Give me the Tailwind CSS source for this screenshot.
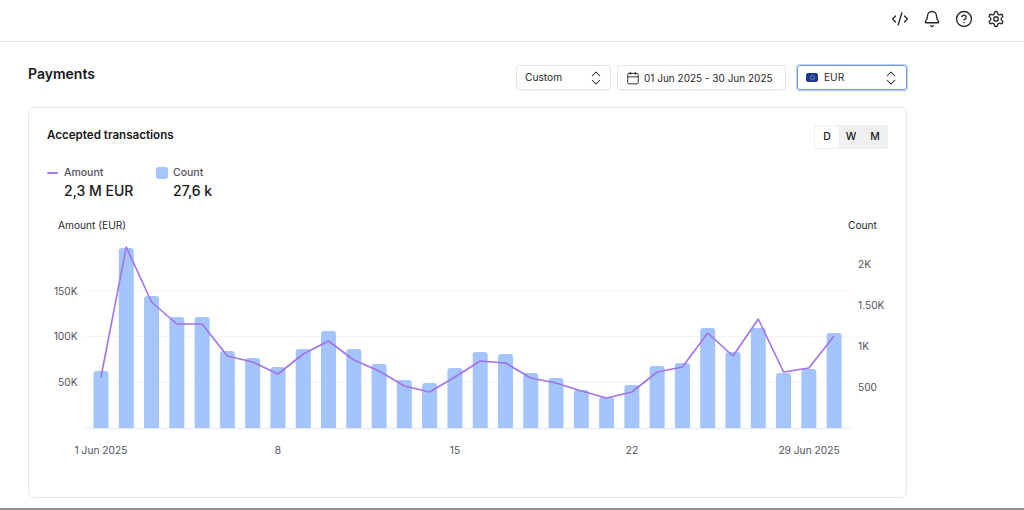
<!DOCTYPE html>
<html lang="en">
<head>
  <meta charset="UTF-8">
  <meta name="viewport" content="width=device-width, initial-scale=1.0">
  <title>Payments</title>
  <script src="https://cdn.jsdelivr.net/npm/@tailwindcss/browser@4"></script>
</head>
<body class="h-[510px] overflow-hidden bg-white font-['Inter',sans-serif] text-[#18181b]">

  <!-- Top bar -->
  <header class="h-[42px] border-b border-[#e8e8ea] flex items-center justify-end gap-[14px] pr-[19px] pb-[4px] text-[#27272a]">
    <svg class="w-[18px] h-[18px]" viewBox="0 0 24 24" fill="none" stroke="currentColor" stroke-width="1.8" stroke-linecap="round" stroke-linejoin="round"><path d="m18 16 4-4-4-4"/><path d="m6 8-4 4 4 4"/><path d="m14.5 4-5 16"/></svg>
    <svg class="w-[18px] h-[18px]" viewBox="0 0 24 24" fill="none" stroke="currentColor" stroke-width="1.8" stroke-linecap="round" stroke-linejoin="round"><path d="M10.3 21a1.94 1.94 0 0 0 3.4 0"/><path d="M3.26 15.33A1 1 0 0 0 4 17h16a1 1 0 0 0 .74-1.67C19.41 13.96 18 12.5 18 8A6 6 0 0 0 6 8c0 4.5-1.41 5.96-2.74 7.33"/></svg>
    <svg class="w-[18px] h-[18px]" viewBox="0 0 24 24" fill="none" stroke="currentColor" stroke-width="1.8" stroke-linecap="round" stroke-linejoin="round"><circle cx="12" cy="12" r="10"/><path d="M9.09 9a3 3 0 0 1 5.83 1c0 2-3 3-3 3"/><path d="M12 17h.01"/></svg>
    <svg class="w-[18px] h-[18px]" viewBox="0 0 24 24" fill="none" stroke="currentColor" stroke-width="1.8" stroke-linecap="round" stroke-linejoin="round"><path d="M12.22 2h-.44a2 2 0 0 0-2 2v.18a2 2 0 0 1-1 1.73l-.43.25a2 2 0 0 1-2 0l-.15-.08a2 2 0 0 0-2.73.73l-.22.38a2 2 0 0 0 .73 2.73l.15.1a2 2 0 0 1 1 1.72v.51a2 2 0 0 1-1 1.74l-.15.09a2 2 0 0 0-.73 2.73l.22.38a2 2 0 0 0 2.73.73l.15-.08a2 2 0 0 1 2 0l.43.25a2 2 0 0 1 1 1.73V20a2 2 0 0 0 2 2h.44a2 2 0 0 0 2-2v-.18a2 2 0 0 1 1-1.73l.43-.25a2 2 0 0 1 2 0l.15.08a2 2 0 0 0 2.73-.73l.22-.39a2 2 0 0 0-.73-2.73l-.15-.08a2 2 0 0 1-1-1.74v-.5a2 2 0 0 1 1-1.74l.15-.09a2 2 0 0 0 .73-2.73l-.22-.38a2 2 0 0 0-2.73-.73l-.15.08a2 2 0 0 1-2 0l-.43-.25a2 2 0 0 1-1-1.73V4a2 2 0 0 0-2-2z"/><circle cx="12" cy="12" r="3"/></svg>
  </header>

  <main class="w-[879px] ml-[28px] relative">
    <!-- Title and filters -->
    <div class="h-[65px] flex items-start justify-between pt-[23px]">
      <h1 class="text-[14px] leading-[20px] font-semibold mt-[-1px]">Payments</h1>
      <div class="flex items-center text-[10.2px] leading-none text-[#27272a]">
        <div class="w-[95px] h-[25px] mr-[6px] pl-[8px] pr-[5px] flex items-center justify-between border border-[#e4e4e7] rounded-[3px] shadow-[0_1px_1px_rgba(0,0,0,0.03)]">
          <span>Custom</span>
          <svg class="w-[18px] h-[18px]" viewBox="0 0 24 24" fill="none" stroke="currentColor" stroke-width="1.4" stroke-linecap="round" stroke-linejoin="round"><path d="m7 15 5 5 5-5"/><path d="m7 9 5-5 5 5"/></svg>
        </div>
        <div class="w-[169px] h-[25px] mr-[11px] pl-[8px] flex items-center gap-[4px] border border-[#e4e4e7] rounded-[3px] shadow-[0_1px_1px_rgba(0,0,0,0.03)]">
          <svg class="w-[14px] h-[14px]" viewBox="0 0 24 24" fill="none" stroke="currentColor" stroke-width="1.6" stroke-linecap="round" stroke-linejoin="round"><rect x="3" y="4" width="18" height="18" rx="2"/><path d="M16 2v4"/><path d="M8 2v4"/><path d="M3 10h18"/></svg>
          <span class="whitespace-nowrap text-[10px]">01 Jun 2025 - 30 Jun 2025</span>
        </div>
        <div class="w-[110px] h-[25px] pl-[8px] pr-[6px] flex items-center justify-between border border-[#6f9cf0] rounded-[3px] shadow-[0_0_0_1px_rgba(111,156,240,0.45)]">
          <span class="flex items-center gap-[6px]">
            <span class="w-[12px] h-[9px] rounded-[2px] bg-[#1e3a8a] flex items-center justify-center">
              <span class="w-[5px] h-[5px] rounded-full border border-[#6d87c9]"></span>
            </span>
            EUR
          </span>
          <svg class="w-[18px] h-[18px]" viewBox="0 0 24 24" fill="none" stroke="currentColor" stroke-width="1.4" stroke-linecap="round" stroke-linejoin="round"><path d="m7 15 5 5 5-5"/><path d="m7 9 5-5 5 5"/></svg>
        </div>
      </div>
    </div>

    <!-- Chart card -->
    <section class="relative h-[391px] border border-[#e8e8ea] rounded-[6px]">
      <div class="flex items-start justify-between pl-[18px] pr-[18px] pt-[19px]">
        <h2 class="text-[11.6px] leading-[16px] font-semibold">Accepted transactions</h2>
        <div class="flex h-[24px] p-[1px] mt-[-2px] rounded-[3px] bg-[#f0f0f1] text-[10.5px] font-medium">
          <span class="w-[24px] flex items-center justify-center rounded-[3px] bg-white">D</span>
          <span class="w-[24px] flex items-center justify-center">W</span>
          <span class="w-[24px] flex items-center justify-center">M</span>
        </div>
      </div>

      <div class="flex pl-[18px] mt-[17px]">
        <div class="w-[109px]">
          <div class="flex items-center h-[14px] text-[10.5px] font-medium text-[#52525b]">
            <span class="w-[11px] h-[2px] mr-[6px] rounded-full bg-[#a678e8]"></span>Amount
          </div>
          <div class="pl-[17px] mt-[1px] text-[14px] leading-[20px] font-medium">2,3 M EUR</div>
        </div>
        <div>
          <div class="flex items-center h-[14px] text-[10.5px] font-medium text-[#52525b]">
            <span class="w-[12px] h-[12px] mr-[5px] rounded-[3px] bg-[#a3c5fb]"></span>Count
          </div>
          <div class="pl-[17px] mt-[1px] text-[14px] leading-[20px] font-medium">27,6 k</div>
        </div>
      </div>

      <svg id="chart" class="absolute left-0 top-0 pointer-events-none" width="877" height="389" viewBox="29 108 877 389" font-size="10.2" fill="#52525b"></svg>
    </section>
  </main>

  <div class="absolute left-0 top-[508px] w-full h-[2px] bg-[#8f8f92]"></div>

  <script>
    const barTops = [371,248,296,317,317,351,358,367,349,331,349,364,380,383,368,352,354,373,378,390,397,385,366,363,328,352,328,373,369,333];
    const lineYs = [377,247,302,324,324,356,362,374,354,341,360,371,386,392,377,361,363,378,383,391,398,392,372,367,333,356,319,372,368,336];
    const baseY = 428;
    const xAt = i => 101 + i * 25.28;

    let svg = '';
    [291, 336.5, 382].forEach(y => {
      svg += `<line x1="84" x2="852" y1="${y}" y2="${y}" stroke="#f4f4f5"/>`;
    });
    svg += `<line x1="84" x2="852" y1="${baseY + 0.5}" y2="${baseY + 0.5}" stroke="#e4ecfa"/>`;

    // Bars with rounded tops
    barTops.forEach((top, i) => {
      const x = xAt(i) - 7.5;
      svg += `<path d="M${x} ${baseY}V${top + 3}a3 3 0 0 1 3-3h9a3 3 0 0 1 3 3V${baseY}z" fill="#a3c5fb"/>`;
    });

    svg += `<polyline points="${lineYs.map((y, i) => `${xAt(i)},${y}`).join(' ')}" fill="none" stroke="#a272e8" stroke-width="1.6" stroke-linejoin="round"/>`;

    const label = (x, y, text, anchor, color) =>
      `<text x="${x}" y="${y}" text-anchor="${anchor}" fill="${color || '#52525b'}">${text}</text>`;

    svg += label(58, 229, 'Amount (EUR)', 'start', '#27272a');
    svg += label(848, 229, 'Count', 'start', '#27272a');
    svg += label(77.5, 294.5, '150K', 'end');
    svg += label(77.5, 340, '100K', 'end');
    svg += label(77.5, 385.5, '50K', 'end');
    svg += label(858, 268, '2K', 'start');
    svg += label(858, 309, '1.50K', 'start');
    svg += label(858, 350, '1K', 'start');
    svg += label(858, 391, '500', 'start');
    svg += label(101, 453.5, '1 Jun 2025', 'middle');
    svg += label(278, 453.5, '8', 'middle');
    svg += label(455, 453.5, '15', 'middle');
    svg += label(632, 453.5, '22', 'middle');
    svg += label(809, 453.5, '29 Jun 2025', 'middle');

    document.getElementById('chart').innerHTML = svg;
  </script>
</body>
</html>
